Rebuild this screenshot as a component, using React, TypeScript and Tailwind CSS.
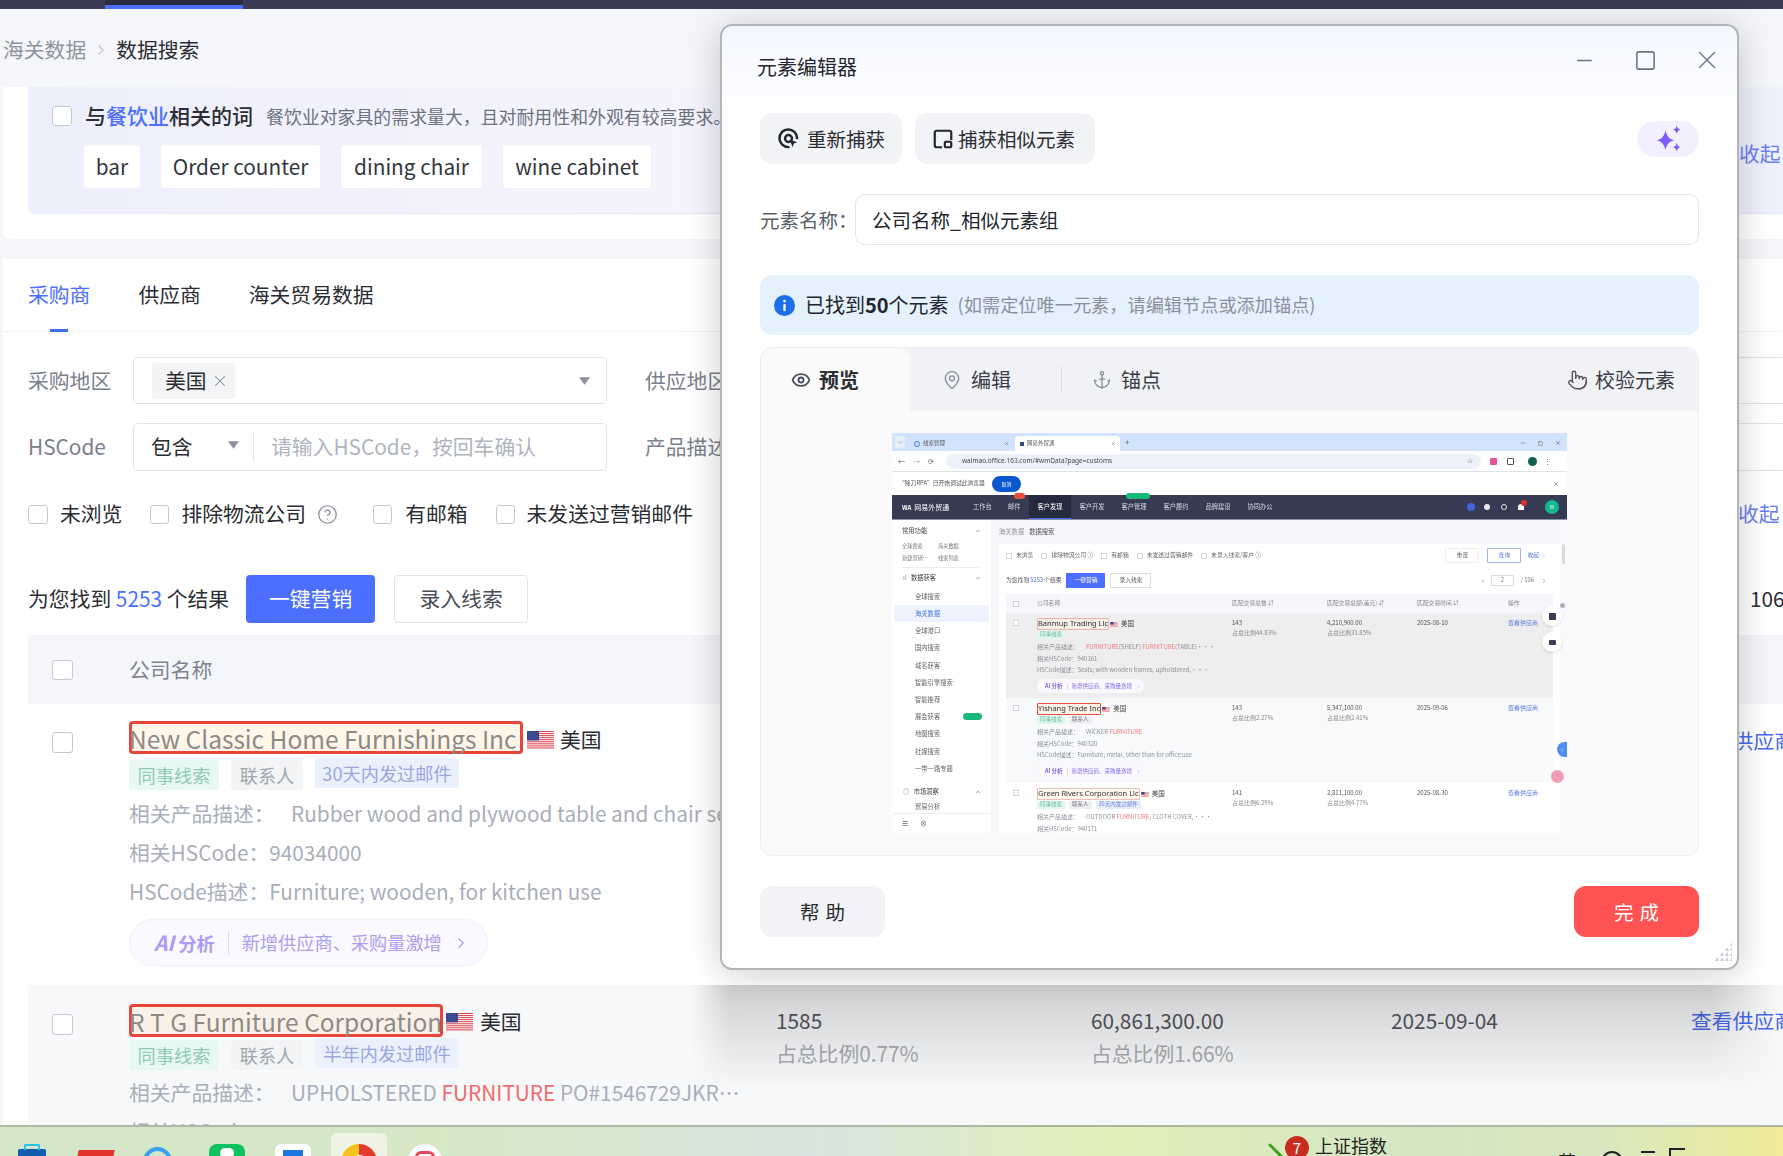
import React from "react";
import { Anchor, ChevronDown, ChevronLeft, ChevronRight, ChevronUp, CircleHelp, Eye, MapPin, Minus, Pointer, Square, X } from "lucide-react";

const Check = ({ className = "" }: { className?: string }) => (
  <span className={"block shrink-0 bg-white border border-[#c6c9d2] rounded-[3px] " + className} />
);

const MiniCheck = () => (
  <span className="block shrink-0 w-[6px] h-[6px] bg-white border border-[#d4d6dc]" />
);

const Flag = ({ className = "" }: { className?: string }) => (
  <svg viewBox="0 0 27 18" className={"shrink-0 " + className}>
    <rect width="27" height="18" fill="#fff" />
    {[0, 1, 2, 3, 4, 5, 6, 7, 8].map((i) => (
      <rect key={i} y={i * 2.05} width="27" height="1.03" fill="#d9434e" />
    ))}
    <rect width="12" height="9.4" fill="#3c4a8f" />
  </svg>
);

const Caret = ({ className = "" }: { className?: string }) => (
  <svg viewBox="0 0 12 8" className={"shrink-0 " + className}>
    <path d="M0 0h12L6 8z" fill="#8b909c" />
  </svg>
);

const Tag = ({ cls, children }: { cls: string; children: React.ReactNode }) => (
  <span className={"h-[30px] flex items-center whitespace-nowrap rounded-[3px] text-[18.2px] leading-none " + cls}>{children}</span>
);

const Line = ({ children }: { children: React.ReactNode }) => (
  <div className="h-[39px] flex items-center whitespace-nowrap text-[20.8px] text-[#a9aeb9]">{children}</div>
);

const CompanyTags = ({ third }: { third: string }) => (
  <div className="flex items-start gap-3">
    <Tag cls="w-[90px] justify-center bg-[#e8f8f3] text-[#8fcab4]">同事线索</Tag>
    <Tag cls="w-[72px] justify-center bg-[#f3f4f6] text-[#a1a5af]">联系人</Tag>
    <Tag cls="w-[144px] justify-center bg-[#eaf1fd] text-[#9aa7dd] -mt-[2px]">{third}</Tag>
  </div>
);

/* ---------- preview thumbnail ---------- */
const miniSide = ["全球搜索", "海关数据", "全球港口", "国内搜索", "域名获客", "智能引擎搜索", "智能推荐", "展会获客", "地图搜索", "社媒搜索", "一带一路专题"];

const MiniTag = ({ cls, children }: { cls: string; children: React.ReactNode }) => (
  <span className={"h-[8px] px-[3px] flex items-center rounded-[1px] text-[5.5px] leading-none " + cls}>{children}</span>
);

const MiniRow = ({ bg, h, name, nameCls, tags, product, code, desc, n, pa, amt, pb, date }: {
  bg: string; h: string; name: string; nameCls: string; tags: string[]; product: React.ReactNode; code: string; desc: string; n: string; pa: string; amt: string; pb: string; date: string;
}) => (
  <div className={"grid grid-cols-[31px_195px_95px_90px_91px_45px] overflow-hidden " + bg + " " + h}>
    <div className="pl-[7px] pt-[7px]"><MiniCheck /></div>
    <div className="pt-[5px] min-w-0">
      <div className="flex items-center gap-[1px] text-[6.5px] text-[#444]">
        <span className={"h-[12px] flex items-center border rounded-[1px] text-[7.5px] text-[#333] font-['Noto_Sans',sans-serif] leading-none whitespace-nowrap " + nameCls}>{name}</span>
        <Flag className="w-[8px] h-[5px]" />
        <span className="ml-[2px]">美国</span>
      </div>
      <div className="flex gap-[4px] mt-[1px]">
        {tags.map((t, i) => (
          <MiniTag key={t} cls={i === 0 ? "bg-[#dff6ef] text-[#6dbb9f]" : i === 1 ? "bg-[#eeeff2] text-[#777]" : "bg-[#e4edfc] text-[#6f86d8]"}>{t}</MiniTag>
        ))}
      </div>
      <div className="text-[6px] leading-[11.7px] text-[#8c9099] whitespace-nowrap mt-[2px]">
        <div className="flex"><span className="w-[49px]">相关产品描述：</span>{product}</div>
        <div>相关HSCode：{code}</div>
        <div>HSCode描述：{desc}</div>
      </div>
      <div className="mt-[3px] w-[107px] h-[14px] rounded-full bg-[#f9f8ff] flex items-center pl-[8px] gap-[4px] text-[5.5px] text-[#7c6fe8] whitespace-nowrap">
        <b>AI 分析</b><span className="w-px h-[7px] bg-[#ddd]" /><span>新增供应商、采购量激增</span><ChevronRight className="w-[5px] h-[5px]" />
      </div>
    </div>
    <div className="pt-[5px] text-[6px] leading-[10px] text-[#555]"><div>{n}</div><div className="text-[#888]">{pa}</div></div>
    <div className="pt-[5px] text-[6px] leading-[10px] text-[#555]"><div>{amt}</div><div className="text-[#888]">{pb}</div></div>
    <div className="pt-[5px] text-[6px] leading-[10px] text-[#555]">{date}</div>
    <div className="pt-[5px] text-[6px] leading-[10px] text-[#5b7be0] whitespace-nowrap">查看供应商</div>
  </div>
);

const Thumb = () => (
  <div className="relative w-[675px] h-[400px] overflow-hidden flex flex-col bg-[#f5f6fa] text-[6.3px] text-[#555] blur-[0.4px]">
    <div className="h-[18px] shrink-0 bg-[#d3e3fd] flex items-end pl-[3px]">
      <span className="w-[10px] h-[12px] mb-[3px] rounded-[3px] bg-[#e8effc] flex items-center justify-center"><ChevronDown className="w-[5px] h-[5px]" /></span>
      <span className="w-[110px] h-[15px] pl-[9px] flex items-center gap-[3px] text-[5.5px]">
        <span className="w-[6px] h-[6px] rounded-full border border-[#3b82f6]" />线索管理<X className="w-[5px] h-[5px] ml-auto mr-[6px]" />
      </span>
      <span className="w-[105px] h-[15px] pl-[5px] rounded-t-[4px] bg-white flex items-center gap-[3px] text-[5.5px]">
        <span className="w-[4px] h-[4px] bg-[#3a4a80]" />网易外贸通<X className="w-[5px] h-[5px] ml-auto mr-[4px]" />
      </span>
      <span className="ml-[5px] mb-[2px] text-[8px] leading-[14px] text-[#555]">+</span>
      <span className="ml-auto mr-[6px] mb-[5px] flex gap-[12px] items-center text-[#444]">
        <Minus className="w-[6px] h-[6px]" /><Square className="w-[5px] h-[5px]" /><X className="w-[6px] h-[6px]" />
      </span>
    </div>
    <div className="h-[21px] shrink-0 bg-white border-b border-[#dfe1e5] flex items-center text-[#555]">
      <span className="pl-[6px] flex gap-[8px] w-[54px] items-center text-[7px]">←<span className="text-[#aaa]">→</span>⟳</span>
      <span className="h-[15px] w-[535px] rounded-full bg-[#edf2fa] flex items-center pl-[16px] text-[6.5px] text-[#444] font-['Noto_Sans',sans-serif] whitespace-nowrap">waimao.office.163.com/#wmData?page=customs<span className="ml-auto mr-[8px] text-[7px]">☆</span></span>
      <span className="ml-[9px] w-[7px] h-[7px] bg-[#e0559a] rounded-[1px]" />
      <span className="ml-[10px] w-[7px] h-[7px] border border-[#555] rounded-[1px]" />
      <span className="ml-[14px] w-[9px] h-[9px] rounded-full bg-[#0f5f4c]" />
      <span className="ml-[7px] text-[7px] leading-none">⋮</span>
    </div>
    <div className="h-[23px] shrink-0 bg-white flex items-center pl-[7px]">
      <span className="text-[5.8px]">“除刀RPA”已开始调试此浏览器</span>
      <span className="ml-[7px] w-[29px] h-[16px] rounded-full bg-[#0b57d0] text-white text-[5px] flex items-center justify-center">取消</span>
      <X className="ml-auto mr-[8px] w-[6px] h-[6px]" />
    </div>
    <div className="h-[25px] shrink-0 bg-[#363a52] flex items-center text-[#d9dbe6] border-b border-[#8a8ea8]">
      <span className="w-[81px] pl-[10px] flex items-center gap-[3px] text-[7px] whitespace-nowrap text-white"><b className="text-[6px]">WA</b>网易外贸通</span>
      <span className="w-[35px]">工作台</span>
      <span className="relative w-[21px]">邮件<span className="absolute -top-[9px] left-[6px] w-[11px] h-[6px] rounded-full bg-[#e5533d]" /></span>
      <span className="h-full w-[42px] bg-[#262a3e] border-b border-[#3f6bff] flex items-center justify-center text-white">客户发现</span>
      <span className="w-[42px] text-center">客户开发</span>
      <span className="relative w-[42px] text-center">客户管理<span className="absolute -top-[9px] left-[13px] w-[24px] h-[6px] rounded-full bg-[#16b979]" /></span>
      <span className="w-[42px] text-center">客户履约</span>
      <span className="w-[42px] text-center">品牌建设</span>
      <span className="w-[42px] text-center">协同办公</span>
      <span className="ml-auto w-[8px] h-[8px] rounded-full bg-[#4466dd]" />
      <span className="ml-[9px] w-[6px] h-[6px] rounded-full bg-[#e8e8ee]" />
      <span className="ml-[11px] w-[6px] h-[6px] rounded-full border border-[#e8e8ee]" />
      <span className="relative ml-[11px] w-[6px] h-[6px] rounded-t-full bg-white"><span className="absolute -top-[4px] left-[3px] w-[6px] h-[6px] rounded-full bg-[#d9342b]" /></span>
      <span className="ml-[21px] mr-[8px] w-[14px] h-[14px] rounded-full bg-[#12b98f] flex items-center justify-center text-white text-[5px]">W</span>
    </div>
    <div className="flex flex-1 min-h-0">
      <div className="w-[99px] shrink-0 bg-white flex flex-col relative">
        <div className="flex-1 overflow-hidden">
          <div className="flex justify-between px-[10px] mt-[6px] h-[10px] items-center text-[#444]">常用功能<ChevronUp className="w-[6px] h-[6px]" /></div>
          <div className="grid grid-cols-[36px_36px] px-[10px] mt-[4px] text-[5.2px] leading-[12px] text-[#777]"><span>全球搜索</span><span>海关数据</span><span>新建营销…</span><span>线索列表</span></div>
          <div className="h-px mx-[10px] mt-[3px] bg-[#eee]" />
          <div className="flex justify-between pl-[11px] pr-[10px] h-[14px] mt-[3px] items-center text-[#444]"><span><span className="mr-[3px] text-[#8890a0]">ıl</span> 数据获客</span><ChevronUp className="w-[6px] h-[6px]" /></div>
          <div className="mt-[3px]">
            {miniSide.map((t) => (
              <div key={t} className={t === "海关数据" ? "h-[17.2px] mx-[2px] pl-[21px] flex items-center rounded-[2px] bg-[#eef3ff] text-[#4a7bd8]" : "h-[17.2px] pl-[23px] flex items-center text-[#666]"}>
                {t}{t === "展会获客" && <span className="ml-[23px] w-[19px] h-[7px] rounded-full bg-[#16b979]" />}
              </div>
            ))}
          </div>
          <div className="flex justify-between pl-[11px] pr-[10px] h-[16px] mt-[7px] items-center text-[#444]"><span><span className="mr-[3px] text-[#8890a0]">◎</span> 市场洞察</span><ChevronUp className="w-[6px] h-[6px]" /></div>
          <div className="pl-[23px] mt-[2px] text-[#666]">贸易分析</div>
        </div>
        <div className="absolute left-0 right-0 bottom-0 h-[20px] bg-white border-t border-[#eee] flex items-center pl-[10px] gap-[12px] text-[7px] text-[#666]"><span>☰</span><span>⊗</span></div>
      </div>
      <div className="w-[8px] shrink-0" />
      <div className="flex-1 min-w-0 flex flex-col">
        <div className="h-[24px] shrink-0 flex items-center text-[#999] gap-[5px]">海关数据<span className="text-[#555]">数据搜索</span></div>
        <div className="flex-1 min-h-0 bg-white pl-[7px] pr-[7px] overflow-hidden">
          <div className="h-[23px] flex items-center text-[5.8px] text-[#666] whitespace-nowrap relative">
            {["未浏览", "排除物流公司 ⓘ", "有邮箱", "未发送过营销邮件", "未录入线索/客户 ⓘ"].map((t) => (
              <span key={t} className="flex items-center gap-[4px] mr-[8px]"><MiniCheck />{t}</span>
            ))}
            <span className="ml-auto w-[34px] h-[15px] border border-[#eee] flex items-center justify-center">重置</span>
            <span className="ml-[8px] w-[34px] h-[15px] border border-[#9db2ee] rounded-[1px] text-[#5b7be0] flex items-center justify-center">查询</span>
            <span className="ml-[6px] mr-[7px] text-[#5b7be0] flex items-center gap-[2px]">收起<ChevronUp className="w-[5px] h-[5px]" /></span>
          </div>
          <div className="h-[27px] flex items-center whitespace-nowrap text-[5.8px]">
            为您找到 <span className="text-[#5470e8] mx-[1px]">5253</span> 个结果
            <span className="ml-[5px] w-[39px] h-[15px] rounded-[1px] bg-[#4c6fff] text-white flex items-center justify-center">一键营销</span>
            <span className="ml-[5px] w-[41px] h-[15px] border border-[#ddd] flex items-center justify-center">录入线索</span>
            <span className="ml-auto flex items-center text-[#777]"><ChevronLeft className="w-[6px] h-[6px]" /><span className="ml-[5px] w-[23px] h-[11px] border border-[#ddd] flex items-center justify-center">2</span><span className="ml-[7px]">/ 106</span><ChevronRight className="ml-[7px] mr-[6px] w-[6px] h-[6px]" /></span>
          </div>
          <div className="h-[19px] grid grid-cols-[31px_195px_95px_90px_91px_45px] items-center bg-[#f5f6fa] text-[5.8px] text-[#888]">
            <div className="pl-[7px]"><MiniCheck /></div><span>公司名称</span><span>匹配交易总数 ⇵</span><span>匹配交易总额(美元) ⇵</span><span>匹配交易时间 ⇵</span><span>操作</span>
          </div>
          <MiniRow bg="bg-[#eeeeee]" h="h-[85px]" name="Banmup Trading Llc" nameCls="border-[#ecb4ae] bg-[#f5efe8]" tags={["同事线索"]}
            product={<span className="ml-[0px]"><span className="text-[#ef7d7d]">FURNITURE</span>(SHELF) <span className="text-[#ef7d7d]">FURNITURE</span>(TABLE)···</span>} code="940161" desc="Seats; with wooden frames, upholstered,···"
            n="143" pa="占总比例44.83%" amt="4,210,900.00" pb="占总比例33.85%" date="2025-08-10" />
          <MiniRow bg="bg-[#f8f9fa]" h="h-[85px]" name="Yishang Trade Inc" nameCls="border-[#e2503f] bg-[#fbf3e8]" tags={["同事线索", "联系人"]}
            product={<span className="ml-[0px]">WICKER <span className="text-[#ef7d7d]">FURNITURE</span></span>} code="940320" desc="Furniture; metal, other than for office use"
            n="143" pa="占总比例2.27%" amt="5,347,100.00" pb="占总比例2.41%" date="2025-09-06" />
          <MiniRow bg="bg-white" h="h-[50px]" name="Green Rivers Corporation Llc" nameCls="border-[#f0bdb7] bg-[#fff8ee]" tags={["同事线索", "联系人", "30天内发过邮件"]}
            product={<span className="ml-[0px]">OUTDOOR <span className="text-[#ef7d7d]">FURNITURE</span>, CLOTH COVER,···</span>} code="940171" desc=""
            n="141" pa="占总比例6.29%" amt="2,811,100.00" pb="占总比例4.77%" date="2025-08-30" />
        </div>
      </div>
      <div className="w-[7px] shrink-0 bg-[#f8f9fd] pt-[24px] pl-[2px]"><div className="w-[3px] h-[20px] bg-[#d8dade] rounded-full" /></div>
    </div>
    <span className="absolute left-[668px] top-[170px] w-[5px] h-[5px] rounded-full bg-[#aeb1b8]" />
    <span className="absolute left-[650px] top-[173px] w-[20px] h-[20px] rounded-full bg-white shadow flex items-center justify-center"><span className="w-[7px] h-[7px] bg-[#3a3d52] rounded-[1px]" /></span>
    <span className="absolute left-[650px] top-[199px] w-[20px] h-[20px] rounded-full bg-white shadow flex items-center justify-center"><span className="w-[7px] h-[5px] bg-[#3a3d52] rounded-[1px]" /></span>
    <span className="absolute left-[665px] top-[309px] w-[10px] h-[15px] rounded-l-full bg-[#4f8df5] flex items-center justify-center"><ChevronLeft className="w-[6px] h-[6px] text-white" /></span>
    <span className="absolute left-[659px] top-[337px] w-[13px] h-[13px] rounded-full bg-[#ef9db5]" />
  </div>
);

const RecaptureIcon = () => (
  <svg viewBox="0 0 24 24" className="w-[23px] h-[23px] shrink-0" fill="none" stroke="#23262e" strokeWidth="2.6">
    <path d="M12 21a9.2 9.2 0 1 1 9-9.4" strokeLinecap="round" />
    <circle cx="12" cy="12" r="3.6" />
    <path d="M13 13l8 3-3.4 1.3L16.4 21z" fill="#23262e" stroke="none" />
  </svg>
);

const SimilarIcon = () => (
  <svg viewBox="0 0 24 24" className="w-[22px] h-[22px] shrink-0" fill="none" stroke="#23262e" strokeWidth="2.4">
    <path d="M11 21H5a2 2 0 0 1-2-2V5a2 2 0 0 1 2-2h14a2 2 0 0 1 2 2v8" />
    <rect x="14" y="15" width="7" height="6" rx="1" />
  </svg>
);

const Grip = () => (
  <svg viewBox="0 0 22 22" className="w-[22px] h-[22px]">
    {[0, 1, 2, 3, 4].flatMap((r) =>
      [0, 1, 2, 3, 4].filter((c) => c >= 4 - r).map((c) => (
        <path key={r + "-" + c} d={`M${c * 5 + 2} ${r * 5 + 1}l-2 4h4z`} fill="#c9ced8" />
      ))
    )}
  </svg>
);

export default function App() {
  return (
    <div className="relative w-[1783px] h-[1156px] overflow-hidden flex flex-col bg-[#f5f6fa] font-['Noto_Sans_CJK_SC',sans-serif] text-[20.8px] text-[#2b2d33]">
      {/* top bar */}
      <div className="h-[9px] shrink-0 bg-[#393c54] pl-[105px]">
        <div className="w-[138px] h-[9px] bg-[#2a2c40] border-b-[4px] border-[#4c6fff]" />
      </div>
      {/* breadcrumb */}
      <div className="h-[78px] shrink-0 pt-[4px] pl-[3px] flex items-center whitespace-nowrap">
        <span className="text-[#8e93a0]">海关数据</span>
        <ChevronRight className="w-[16px] h-[16px] mx-[7px] text-[#c4c7cf]" />
        <span className="text-[#2b2d33]">数据搜索</span>
      </div>
      {/* scrolling content */}
      <div className="flex-1 min-h-0 overflow-hidden pl-[3px]">
        <div className="w-[1820px] h-[152px] bg-white rounded-b-[6px] pl-[25px]">
          <div className="h-[127px] border-b border-[#ebe6f9] rounded-bl-[8px] bg-[linear-gradient(90deg,#eeeffd,#f7f6fd_50%,#eef0fd)] pt-[19px] pl-[24px]">
            <div className="flex items-center h-[20px] whitespace-nowrap">
              <Check className="w-[20px] h-[20px]" />
              <span className="ml-[13px] font-medium text-[21px]">与<span className="text-[#4c6fff]">餐饮业</span>相关的词</span>
              <span className="ml-[13px] text-[17.9px] text-[#6d717c]">餐饮业对家具的需求量大，且对耐用性和外观有较高要求。</span>
            </div>
            <div className="flex mt-[18px] ml-[31px]">
              <div className="w-[1656px] shrink-0 flex gap-[19px]">
                {[["bar", "w-[58px]"], ["Order counter", "w-[161px]"], ["dining chair", "w-[143px]"], ["wine cabinet", "w-[150px]"]].map(([t, w]) => (
                  <span key={t} className={"h-[45px] rounded-[4px] bg-white border border-[#f1eff9] flex items-center justify-center text-[#33363e] " + w}>{t}</span>
                ))}
              </div>
              <span className="-mt-[6px] text-[#6c7ff0] whitespace-nowrap">收起</span>
            </div>
          </div>
        </div>
        <div className="h-[20px]" />
        <div className="w-[1820px] bg-white">
          {/* tabs */}
          <div className="h-[73px] border-b border-[#eef0f4] pl-[25px] flex items-start pt-[20px] gap-[48px]">
            <span className="relative h-[53px] text-[#4c6fff]">采购商<span className="absolute left-[22px] bottom-0 w-[18px] h-[3px] bg-[#3f6fe8]" /></span>
            <span>供应商</span>
            <span>海关贸易数据</span>
          </div>
          <div className="pl-[25px]">
            {/* filter row 1 */}
            <div className="flex items-center mt-[25px] h-[47px]">
              <span className="w-[105px] shrink-0 text-[#7b808c]">采购地区</span>
              <div className="w-[474px] shrink-0 h-[47px] border border-[#e2e4ea] rounded-[4px] flex items-center pl-[18px] pr-[16px]">
                <span className="w-[83px] h-[36px] bg-[#f3f4f6] rounded-[3px] flex items-center pl-[13px]">美国<X className="w-[18px] h-[18px] ml-[4px] text-[#8b8f9a]" strokeWidth={1.4} /></span>
                <Caret className="ml-auto w-[11px] h-[8px]" />
              </div>
              <span className="w-[105px] shrink-0 ml-[38px] text-[#7b808c] whitespace-nowrap">供应地区</span>
              <div className="w-[1100px] shrink-0 h-[47px] border border-[#e2e4ea]" />
            </div>
            {/* filter row 2 */}
            <div className="flex items-center mt-[19px] h-[48px]">
              <span className="w-[105px] shrink-0 text-[#7b808c]">HSCode</span>
              <div className="w-[474px] shrink-0 h-[48px] border border-[#e2e4ea] rounded-[4px] flex items-center pl-[17px]">
                <span className="w-[77px]">包含</span>
                <Caret className="w-[11px] h-[8px] -mt-[4px]" />
                <span className="w-px h-[30px] bg-[#e4e6eb] ml-[14px]" />
                <span className="ml-[17px] text-[#b0b4be] whitespace-nowrap">请输入HSCode，按回车确认</span>
              </div>
              <span className="w-[105px] shrink-0 ml-[38px] text-[#7b808c] whitespace-nowrap">产品描述</span>
              <div className="w-[1100px] shrink-0 h-[48px] border border-[#e2e4ea]" />
            </div>
            {/* checkboxes */}
            <div className="flex items-center mt-[32px] h-[22px] whitespace-nowrap">
              <div className="w-[1710px] shrink-0 flex items-center">
                <Check className="w-[20px] h-[19px]" />
                <span className="ml-[12px]">未浏览</span>
                <Check className="w-[19px] h-[19px] ml-[28px]" />
                <span className="ml-[12px]">排除物流公司</span>
                <CircleHelp className="w-[21px] h-[21px] ml-[11px] text-[#868b99]" strokeWidth={1.4} />
                <Check className="w-[19px] h-[19px] ml-[35px]" />
                <span className="ml-[13px]">有邮箱</span>
                <Check className="w-[19px] h-[19px] ml-[28px]" />
                <span className="ml-[12px]">未发送过营销邮件</span>
              </div>
              <span className="text-[#6c7ff0]">收起</span>
            </div>
            {/* results */}
            <div className="flex items-center mt-[50px] h-[48px] whitespace-nowrap">
              <div className="w-[1722px] shrink-0 flex items-center">
                <span>为您找到 <span className="text-[#4c6fff]">5253</span> 个结果</span>
                <span className="ml-[17px] w-[129px] h-[48px] rounded-[4px] bg-[#4c6fff] text-white flex items-center justify-center">一键营销</span>
                <span className="ml-[19px] w-[134px] h-[48px] rounded-[4px] border border-[#e2e4ea] text-[#4a4d55] flex items-center justify-center">录入线索</span>
              </div>
              <span>106</span>
            </div>
            {/* table */}
            <div className="mt-[12px] h-[69px] bg-[#f5f6fa] flex items-center">
              <Check className="w-[21px] h-[20px] ml-[24px]" />
              <span className="ml-[56px] text-[#7e8391]">公司名称</span>
            </div>
            <div className="grid grid-cols-[101px_647px_315px_300px_300px_200px] h-[281px] pt-[17px] bg-white">
              <div className="pl-[24px] pt-[11px]"><Check className="w-[21px] h-[21px]" /></div>
              <div>
                <div className="flex items-center h-[33px] whitespace-nowrap">
                  <span className="w-[394px] h-[33px] pt-[3px] rounded-[4px] shadow-[inset_0_0_0_3px_#e8443a] bg-[#fff6ea] text-[#8d8a86] text-[24.5px] flex items-center overflow-hidden leading-none">New Classic Home Furnishings Inc</span>
                  <span className="flex items-center mt-[4px]">
                    <Flag className="w-[27px] h-[18px] ml-[4px]" />
                    <span className="ml-[6px]">美国</span>
                  </span>
                </div>
                <div className="mt-[6px] mb-[4px]"><CompanyTags third="30天内发过邮件" /></div>
                <Line><span className="w-[162px]">相关产品描述：</span>Rubber wood and plywood table and chair sets</Line>
                <Line>相关HSCode：94034000</Line>
                <Line>HSCode描述：Furniture; wooden, for kitchen use</Line>
                <div className="mt-[8px] w-[359px] h-[47px] rounded-full bg-[#faf9ff] border border-[#f1effb] flex items-center pl-[24px] whitespace-nowrap text-[18.2px]">
                  <span className="font-bold text-[#a89cf5]"><i className="text-[20.8px]">AI</i> 分析</span>
                  <span className="w-px h-[24px] bg-[#dcd8f5] ml-[13px]" />
                  <span className="ml-[13px] text-[#a8a0ee]">新增供应商、采购量激增</span>
                  <ChevronRight className="w-[18px] h-[18px] ml-[10px] text-[#a8a0ee]" strokeWidth={1.5} />
                </div>
              </div>
              <div /><div /><div />
              <div className="pt-[4px] text-[#4a68e8] whitespace-nowrap">查看供应商</div>
            </div>
            <div className="relative grid grid-cols-[101px_647px_315px_300px_300px_200px] h-[160px] pt-[19px] bg-[#f7f8fa]">
              <div className="pl-[24px] pt-[10px]"><Check className="w-[21px] h-[21px]" /></div>
              <div>
                <div className="flex items-center h-[33px] whitespace-nowrap">
                  <span className="w-[314px] h-[33px] pt-[3px] rounded-[4px] shadow-[inset_0_0_0_3px_#e8443a] bg-[#f9f1e7] text-[#8d8a86] text-[24.5px] flex items-center overflow-hidden leading-none">R T G Furniture Corporation</span>
                  <span className="flex items-center mt-[2px]">
                    <Flag className="w-[27px] h-[18px] ml-[3px]" />
                    <span className="ml-[7px]">美国</span>
                  </span>
                </div>
                <div className="mt-[3px] mb-[3px]"><CompanyTags third="半年内发过邮件" /></div>
                <Line><span className="w-[162px]">相关产品描述：</span><span className="w-[452px] truncate">UPHOLSTERED <span className="text-[#f36a6a]">FURNITURE</span> PO#1546729JKR···</span></Line>
                <Line>相关HSCode：940161</Line>
              </div>
              <div className="leading-[33px] text-[#55575c]">1585<div className="text-[#a9abb0]">占总比例0.77%</div></div>
              <div className="leading-[33px] text-[#55575c]">60,861,300.00<div className="text-[#a9abb0]">占总比例1.66%</div></div>
              <div className="leading-[33px] text-[#55575c]">2025-09-04</div>
              <div className="leading-[33px] text-[#4a68e8] whitespace-nowrap">查看供应商</div>
              <div className="absolute left-[662px] top-0 w-[1100px] h-[106px] pointer-events-none bg-[linear-gradient(180deg,rgba(0,0,0,0.16),rgba(0,0,0,0))] [mask-image:linear-gradient(90deg,transparent,black_40px,black_1020px,transparent_1090px)]" />
            </div>
          </div>
        </div>
      </div>
      {/* taskbar */}
      <div className="relative h-[31px] shrink-0 overflow-hidden border-t-[2px] border-[#aeb8a4] bg-[linear-gradient(90deg,#d3e6c8,#d6e8c6_25%,#d7e6df_46%,#dff0b8_62%,#d3e6c3_80%,#d8e8bf_90%,#f1eb98)] flex items-start whitespace-nowrap">
        <span className="relative ml-[18px] mt-[22px] w-[28px] h-[20px] rounded-[2px] bg-[#0f5fae]"><span className="absolute left-[6px] -top-[5px] w-[16px] h-[6px] border-2 border-b-0 border-[#27c1ee] rounded-t-[2px]" /></span>
        <span className="ml-[31px] mt-[23px] w-[36px] h-[16px] bg-[#e5322d] skew-x-[-12deg]" />
        <span className="ml-[30px] mt-[20px] w-[29px] h-[29px] rounded-full border-[4px] border-[#3aa0f0]" />
        <span className="ml-[37px] mt-[17px] w-[36px] h-[36px] rounded-[8px] bg-[#0dc25f] flex justify-center pt-[4px]"><span className="w-[14px] h-[10px] rounded-full bg-white" /></span>
        <span className="relative ml-[30px] mt-[17px] w-[36px] h-[36px] rounded-[6px] bg-white"><span className="absolute left-[8px] top-[6px] w-[20px] h-[20px] bg-[#1a78e0]" /></span>
        <span className="ml-[20px] mt-[6px] w-[56px] h-[40px] rounded-[6px] bg-[#eef3e4] flex justify-center pt-[11px]">
          <span className="w-[36px] h-[36px] rounded-full bg-[conic-gradient(#e23b2e_0_33%,#2e9e45_33%_66%,#f8c21b_66%)] flex items-center justify-center"><span className="w-[15px] h-[15px] rounded-full bg-[#3b7de0] border-[3px] border-white" /></span>
        </span>
        <span className="ml-[21px] mt-[17px] w-[34px] h-[34px] rounded-full bg-white flex items-center justify-center"><span className="w-[20px] h-[20px] rounded-[6px] border-[3px] border-[#e5485a]" /></span>
        <svg viewBox="0 0 24 24" className="ml-[826px] mt-[14px] w-[24px] h-[24px] -mr-[7px] shrink-0" fill="none" stroke="#3f9f1e" strokeWidth="3" strokeLinecap="round"><path d="M2 4l14 14" /></svg>
        <span className="relative mt-[9px] w-[24px] h-[24px] rounded-full bg-[#c92c20] text-white text-[15px] leading-[24px] text-center">7</span>
        <span className="ml-[6px] mt-[5px] text-[#222] text-[18px]">上证指数</span>
        <span className="ml-[171px] mt-[21px] text-[#222] text-[18px]">英</span>
        <span className="ml-[25px] mt-[24px] w-[22px] h-[22px] rounded-full border-2 border-[#222]" />
        <span className="ml-[18px] mt-[24px] w-[14px] h-[14px] border-t-2 border-[#222]" />
        <span className="ml-[14px] mt-[21px] w-[16px] h-[16px] border-t-2 border-l-2 border-[#222]" />
      </div>

      {/* element editor modal */}
      <div className="absolute left-[720px] top-[24px] w-[1019px] h-[946px] rounded-[12px] border-2 border-[#b4b5b9] bg-[linear-gradient(180deg,#f4f7ff_0,#ffffff_90px)] shadow-[0_4px_36px_rgba(0,0,0,0.2)] px-[38px] flex flex-col">
        <div className="h-[87px] shrink-0 relative">
          <span className="absolute -left-[3px] top-[28px] text-[20px] leading-[26px] text-[#23262e]">元素编辑器</span>
          <div className="absolute right-[-38px] top-[21px] flex items-center text-[#6b7280]">
            <span className="w-[61px] h-[26px] flex items-center justify-center"><Minus className="w-[23px] h-[23px]" strokeWidth={1.4} /></span>
            <span className="w-[61px] h-[26px] flex items-center justify-center"><Square className="w-[23px] h-[23px]" strokeWidth={1.6} /></span>
            <span className="w-[61px] h-[26px] flex items-center justify-center"><X className="w-[30px] h-[30px]" strokeWidth={1.1} /></span>
          </div>
        </div>
        <div className="flex items-center h-[51px] shrink-0 text-[19.5px]">
          <span className="w-[142px] h-[51px] rounded-[12px] bg-[#f2f3f6] flex items-center pl-[17px] gap-[7px]"><RecaptureIcon />重新捕获</span>
          <span className="ml-[13px] w-[180px] h-[51px] rounded-[12px] bg-[#f2f3f6] flex items-center pl-[17px] gap-[4px]"><SimilarIcon />捕获相似元素</span>
          <span className="ml-auto w-[62px] h-[36px] rounded-full bg-[#f0f0ff] flex items-center justify-center">
            <svg viewBox="0 0 24 24" className="w-[30px] h-[30px]" fill="#7c5cff"><path d="M10 5c1 5 3 7 7 8-4 1-6 3-7 8-1-5-3-7-7-8 4-1 6-3 7-8z" /><path d="M19 1c.4 2 1.2 3 3 3.500-1.800.5-2.600 1.500-3 3.500-.4-2-1.200-3-3-3.500 1.800-.5 2.600-1.500 3-3.500z" /><path d="M19 15c.4 2 1.200 3 3 3.500-1.800.5-2.600 1.500-3 3.500-.4-2-1.200-3-3-3.500 1.800-.5 2.600-1.500 3-3.500z" /></svg>
          </span>
        </div>
        <div className="flex items-center mt-[30px] h-[51px] shrink-0 text-[19.5px]">
          <span className="w-[95px] text-[#5b5f69] whitespace-nowrap">元素名称：</span>
          <div className="flex-1 h-[51px] border border-[#e4e5ec] rounded-[10px] flex items-center pl-[16px] text-[#23262e]">公司名称_相似元素组</div>
        </div>
        <div className="mt-[30px] h-[60px] shrink-0 rounded-[12px] bg-[#e6f1fe] flex items-center pl-[14px] whitespace-nowrap">
          <svg viewBox="0 0 20 20" className="w-[21px] h-[21px] shrink-0"><circle cx="10" cy="10" r="10" fill="#1c6fe8" /><rect x="8.900" y="8.500" width="2.200" height="7" rx="1" fill="#fff" /><circle cx="10" cy="5.800" r="1.300" fill="#fff" /></svg>
          <span className="ml-[10px] text-[20px] text-[#23262e]">已找到<b>50</b>个元素</span>
          <span className="ml-[9px] text-[18.2px] text-[#8b909c]">(如需定位唯一元素，请编辑节点或添加锚点)</span>
        </div>
        <div className="mt-[12px] h-[509px] shrink-0 rounded-[12px] border border-[#eceef3] bg-[#fafafa] overflow-hidden flex flex-col">
          <div className="h-[63px] shrink-0 bg-[#f1f2f6] flex items-center text-[20px] whitespace-nowrap">
            <span className="w-[149px] h-[63px] rounded-t-[12px] bg-[#fafafa] flex items-center pl-[30px] gap-[8px] font-bold"><Eye className="w-[20px] h-[20px] text-[#4b5060]" strokeWidth={2.2} />预览</span>
            <span className="ml-[32px] flex items-center gap-[9px] text-[#3a3d46]"><MapPin className="w-[20px] h-[24px] text-[#8b909c]" strokeWidth={1.6} />编辑</span>
            <span className="ml-[50px] w-px h-[27px] bg-[#dcdee4]" />
            <span className="ml-[30px] flex items-center gap-[9px] text-[#3a3d46]"><Anchor className="w-[20px] h-[24px] text-[#8b909c]" strokeWidth={1.6} />锚点</span>
            <span className="ml-auto mr-[23px] flex items-center gap-[7px] text-[#3a3d46]"><Pointer className="w-[21px] h-[24px] text-[#555]" strokeWidth={1.6} />校验元素</span>
          </div>
          <div className="flex justify-center pt-[22px]"><Thumb /></div>
        </div>
        <div className="mt-[30px] flex justify-between shrink-0 text-[19.5px]">
          <span className="w-[125px] h-[51px] rounded-[12px] bg-[#f2f3f6] flex items-center justify-center tracking-[6px] pl-[6px]">帮助</span>
          <span className="w-[125px] h-[51px] rounded-[12px] bg-[#ff5252] text-white flex items-center justify-center tracking-[6px] pl-[6px]">完成</span>
        </div>
        <div className="absolute right-[5px] bottom-[5px]"><Grip /></div>
      </div>
    </div>
  );
}
